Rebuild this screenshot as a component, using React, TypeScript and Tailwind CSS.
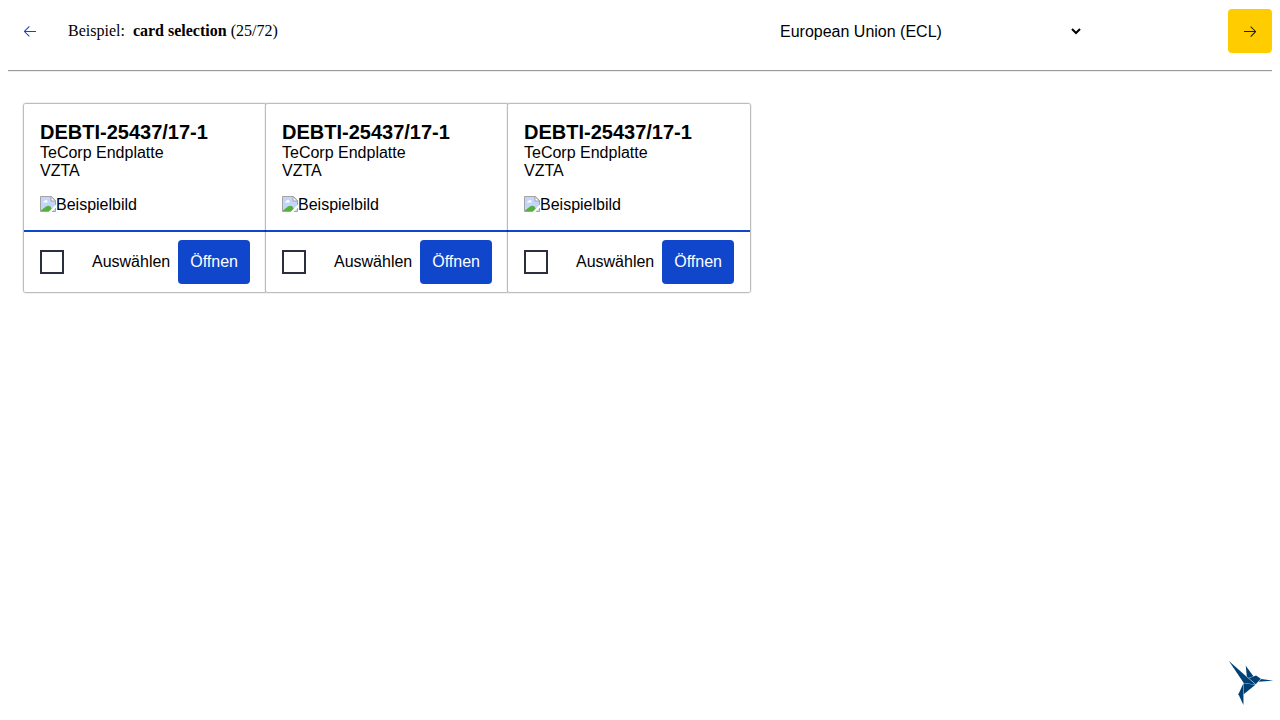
import { VscArrowLeft, VscArrowRight } from 'react-icons/vsc';

function BrokenImageIcon() {
  return (
    <svg aria-hidden="true" viewBox="0 0 16 16" className="h-4 w-4 shrink-0">
      <path d="M0.5 0.5H11.5L15.5 4.5V15.5H0.5Z" fill="#c3d5fb" stroke="#a3a3a3" />
      <path d="M11 0.5V5H15.5Z" fill="#fff" stroke="#a3a3a3" />
      <path d="M3 6.5Q3 5 4.5 5Q5 3.5 6.5 4Q8 4.5 7.5 6.5Z" fill="#fff" />
      <path d="M1 15V14.5L6 10.5Q8 9 10.5 10.5L13 15Z" fill="#57b03c" />
      <path d="M8.5 16L16 8.5V11.5L11.5 16Z" fill="#fff" />
    </svg>
  );
}

function Hummingbird() {
  return (
    <svg role="img" aria-label="KoliBri" viewBox="0 0 600 600" className="h-[50px] w-[50px]" fill="#004175">
      <path d="M353 322L213 304V434L353 322Z" />
      <path d="M209 564V304L149 434L209 564Z" />
      <path d="M357 316L417 250L361 210L275 244L357 316Z" />
      <path d="M329 218L237 92L250 222L272 241L329 218Z" />
      <path d="M353 318L35 36L213 300L353 318Z" />
      <path d="M391 286L565 272L421 252L391 286Z" />
    </svg>
  );
}

function Card({ id }: { id: string }) {
  return (
    <article className="rounded-[1px] bg-white shadow-[0_0_2px_#000000]">
      <div className="p-4">
        <h2 className="text-xl leading-6 font-bold">DEBTI-25437/17-1</h2>
        <p>TeCorp Endplatte</p>
        <p>VZTA</p>
        <div className="mt-4 flex">
          <BrokenImageIcon />
          <span>Beispielbild</span>
        </div>
      </div>
      <div className="flex items-center justify-between border-t-2 border-[#0f46cc] px-4 py-2">
        <input id={id} type="checkbox" className="h-6 w-6 appearance-none border-2 border-[#2b2e3c] bg-white checked:bg-[#0f46cc]" />
        <div className="flex items-center gap-2">
          <label htmlFor={id}>Auswählen</label>
          <button type="button" className="h-11 rounded-sm bg-[#0f46cc] px-3 text-white">Öffnen</button>
        </div>
      </div>
    </article>
  );
}

export default function App() {
  return (
    <div className="flex min-h-screen flex-col bg-white px-2 font-['Liberation_Sans',Arial,sans-serif] text-base leading-[18px] text-black">
      <header className="flex items-center border-b border-[#9a9a9a] pt-[9px] pb-[17px]">
        <a href="#previous" aria-label="Zurück" className="flex h-11 w-11 items-center justify-center text-[#0f46cc]">
          <VscArrowLeft size={16} />
        </a>
        <p className="ml-4 flex-1 font-['Liberation_Serif','Times_New_Roman',serif]">
          Beispiel:&nbsp; <strong>card selection</strong> (25/72)
        </p>
        <select aria-label="Theme" className="mr-36 h-11 w-[308px] border-0 bg-white">
          <option>European Union (ECL)</option>
        </select>
        <a href="#next" aria-label="Weiter" className="flex h-11 w-11 items-center justify-center rounded-sm bg-[#ffcc00] text-[#202020]">
          <VscArrowRight size={16} />
        </a>
      </header>
      <main className="flex-1 border-t border-[#eeeeee] px-4 pt-8">
        <div className="grid w-fit grid-cols-[repeat(3,242px)]">
          <Card id="select-1" />
          <Card id="select-2" />
          <Card id="select-3" />
        </div>
      </main>
      <footer className="-mr-1 flex justify-end pb-3">
        <Hummingbird />
      </footer>
    </div>
  );
}
